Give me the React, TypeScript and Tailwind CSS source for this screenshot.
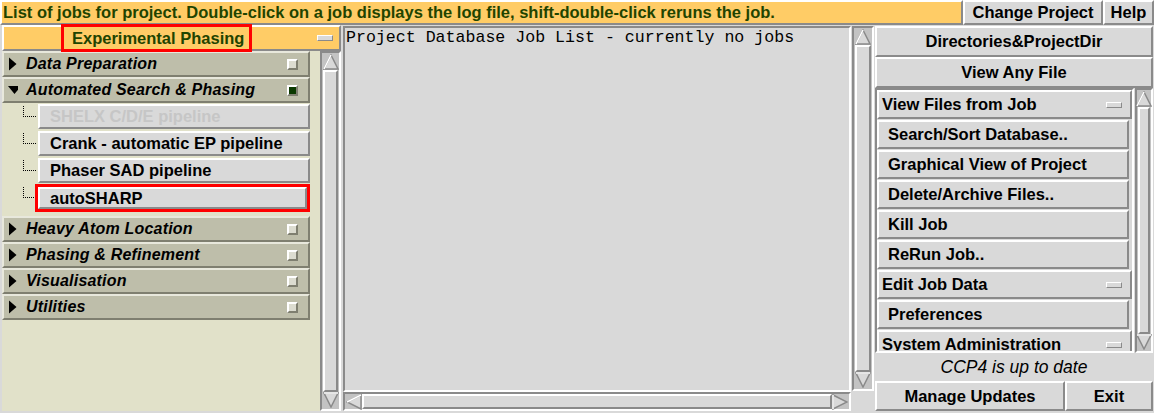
import React from 'react';

const raised = 'border-2 border-t-white border-l-white border-b-[#8a8a8a] border-r-[#8a8a8a]';
const sunken = 'border-2 border-t-[#8a8a8a] border-l-[#8a8a8a] border-b-white border-r-white';
const olive = 'border-2 border-t-[#e8e8dc] border-l-[#e8e8dc] border-b-[#7f7f70] border-r-[#7f7f70]';

const Arrow: React.FC<{ dir: 'up' | 'down' | 'left' | 'right' }> = ({ dir }) => {
  const pts = {
    up: '8,1 15,15 1,15',
    down: '1,1 15,1 8,15',
    left: '1,8 15,1 15,15',
    right: '1,1 15,8 1,15',
  }[dir];
  return (
    <svg width="16" height="16" viewBox="0 0 16 16" className="shrink-0">
      <polygon points={pts} fill="#d9d9d9" stroke="#8a8a8a" strokeWidth="1.5" />
      <polyline points={dir === 'up' ? '1,15 8,1' : dir === 'down' ? '1,1 15,1' : dir === 'left' ? '15,1 1,8' : '1,15 1,1'} fill="none" stroke="#fff" strokeWidth="1.5" />
    </svg>
  );
};

const VScroll: React.FC<{ w: string }> = ({ w }) => (
  <div className={`${w} ${sunken} bg-[#c3c3c3] flex flex-col items-stretch`}>
    <div className="flex justify-center pt-[1px]"><Arrow dir="up" /></div>
    <div className={`flex-1 ${raised} bg-[#d9d9d9] mx-[1px]`} />
    <div className="flex justify-center pb-[1px]"><Arrow dir="down" /></div>
  </div>
);

const Indicator: React.FC<{ on?: boolean }> = ({ on }) => (
  <div className={`w-[11px] h-[11px] border-2 ${on ? 'bg-[#0b3a00] border-t-white border-l-white border-b-[#7f7f70] border-r-[#7f7f70]' : 'bg-[#dcdcd0] border-t-white border-l-white border-b-[#7f7f70] border-r-[#7f7f70]'}`} />
);

const Dash: React.FC<{ className?: string }> = ({ className = '' }) => (
  <div className={`w-[16px] h-[6px] ${raised} border-[1.5px] bg-[#d9d9d9] ${className}`} />
);

const Category: React.FC<{ label: string; open?: boolean }> = ({ label, open }) => (
  <div className={`h-[26px] shrink-0 ${olive} bg-[#bebeaa] flex items-center pl-[4px] pr-[10px]`}>
    <svg width="10" height="14" viewBox="0 0 10 14" className="mr-[8px]">
      {open ? <polygon points="0,3 13,3 6.5,11" fill="#000" /> : <polygon points="1,0.5 8.5,7 1,13.5" fill="#000" />}
    </svg>
    <span className="flex-1 italic font-bold text-[16px] text-black tracking-[0.2px]">{label}</span>
    <Indicator on={open} />
  </div>
);

const SubItem: React.FC<{ label: string; disabled?: boolean; selected?: boolean }> = ({ label, disabled, selected }) => (
  <div className="flex items-start h-[27px] shrink-0">
    <svg width="36" height="26" viewBox="0 0 36 26" className="shrink-0" shapeRendering="crispEdges">
      <line x1="21.5" y1="2" x2="21.5" y2="13" stroke="#000" strokeWidth="1" strokeDasharray="1 1" />
      <line x1="23" y1="12.5" x2="35" y2="12.5" stroke="#000" strokeWidth="1" strokeDasharray="1 1" />
    </svg>
    <div className={`flex-1 ${selected ? 'h-[28px] -mt-[1px] border-[3px] border-[#ff0000] -ml-[3px]' : 'h-[25px]'}`}>
      <div className={`h-full ${raised} bg-[#d9d9d9] flex items-center pl-[10px] font-bold text-[16.5px] ${disabled ? 'text-[#c6c6c6]' : 'text-black'}`}>
        {label}
      </div>
    </div>
  </div>
);

const RightBtn: React.FC<{ label: string }> = ({ label }) => (
  <div className={`h-[29px] shrink-0 ${raised} bg-[#d9d9d9] flex items-center pl-[9px] font-bold text-[16.5px] text-black mt-[1px] mr-[3px]`}>{label}</div>
);

const RightMenu: React.FC<{ label: string }> = ({ label }) => (
  <div className={`h-[29px] shrink-0 ${raised} bg-[#d9d9d9] flex items-center pl-[3px] pr-[8px] font-bold text-[16.5px] text-black mt-[1px]`}>
    <span className="flex-1">{label}</span>
    <Dash />
  </div>
);

export default function App() {
  return (
    <div className="w-[1154px] h-[413px] bg-[#d9d9d9] flex flex-col overflow-hidden font-['Liberation_Sans',Arial,sans-serif] text-black">
      {/* top bar */}
      <div className="flex h-[25px] shrink-0">
        <div className={`flex-1 ${raised} bg-[#ffcc66] flex items-center pl-[1px] font-bold text-[16.5px] text-[#1f4400] whitespace-nowrap overflow-hidden`}>
          List of jobs for project. Double-click on a job displays the log file, shift-double-click reruns the job.
        </div>
        <div className={`w-[140px] ${raised} flex items-center justify-center font-bold text-[16.5px]`}>Change Project</div>
        <div className={`w-[51px] ${raised} flex items-center justify-center font-bold text-[16.5px]`}>Help</div>
      </div>

      <div className="flex flex-1 min-h-0">
        {/* left panel */}
        <div className="w-[341px] flex flex-col pl-[2px] pb-[2px]">
          <div className={`h-[26px] ${raised} bg-[#ffcc66] flex items-center relative`}>
            <div className="absolute left-[57px] top-[-3px] w-[191px] h-[28px] border-[3px] border-[#ff0000]" />
            <span className="flex-1 pl-[68px] font-bold text-[16.5px] text-[#1f4400]">Experimental Phasing</span>
            <Dash className="mr-[6px]" />
          </div>
          <div className="flex flex-1 min-h-0">
            <div className="flex-1 bg-[#e1e1c9] pr-[10px] flex flex-col">
              <Category label="Data Preparation" />
              <Category label="Automated Search & Phasing" open />
              <div className="h-[1px] shrink-0" />
              <SubItem label="SHELX C/D/E pipeline" disabled />
              <SubItem label="Crank - automatic EP pipeline" />
              <SubItem label="Phaser SAD pipeline" />
              <SubItem label="autoSHARP" selected />
              <div className="h-[4px] shrink-0" />
              <Category label="Heavy Atom Location" />
              <Category label="Phasing & Refinement" />
              <Category label="Visualisation" />
              <Category label="Utilities" />
            </div>
            <VScroll w="w-[21px]" />
          </div>
        </div>

        {/* middle panel */}
        <div className="w-[533px] flex flex-col pl-[2px] pt-[1px] pb-[2px]">
          <div className="flex flex-1 min-h-0">
            <div className={`flex-1 ${sunken} bg-[#d9d9d9] px-[1px] pt-[1px] font-['Liberation_Mono',monospace] text-[16.6px] leading-[18px] whitespace-pre`}>
              Project Database Job List - currently no jobs
            </div>
            <div className="w-[23px] pl-[1px] pb-[1px]">
              <VScroll w="w-[22px] h-full" />
            </div>
          </div>
          <div className="flex h-[19px] pr-[23px]">
            <div className={`flex-1 ${sunken} bg-[#c3c3c3] flex items-stretch`}>
              <div className="flex items-center pl-[1px]"><Arrow dir="left" /></div>
              <div className={`flex-1 ${raised} bg-[#d9d9d9]`} />
              <div className="flex items-center pr-[1px]"><Arrow dir="right" /></div>
            </div>
          </div>
        </div>

        {/* right panel */}
        <div className="flex-1 flex flex-col pl-[1px] pr-[1px] pt-[1px] pb-[2px]">
          <div className={`h-[31px] shrink-0 ${raised} flex items-center justify-center font-bold text-[16.5px]`}>Directories&amp;ProjectDir</div>
          <div className={`h-[31px] shrink-0 ${raised} flex items-center justify-center font-bold text-[16.5px]`}>View Any File</div>
          <div className="flex h-[265px] shrink-0">
            <div className={`flex-1 ${sunken} overflow-hidden flex flex-col`}>
              <div className="-mt-[1px] flex flex-col">
                <RightMenu label="View Files from Job" />
                <RightBtn label="Search/Sort Database.." />
                <RightBtn label="Graphical View of Project" />
                <RightBtn label="Delete/Archive Files.." />
                <RightBtn label="Kill Job" />
                <RightBtn label="ReRun Job.." />
                <RightMenu label="Edit Job Data" />
                <RightBtn label="Preferences" />
                <RightMenu label="System Administration" />
              </div>
            </div>
            <div className="w-[19px] pl-[1px]">
              <VScroll w="w-[18px] h-full" />
            </div>
          </div>
          <div className="flex-1 flex items-center justify-center italic text-[17.5px] font-normal">CCP4 is up to date</div>
          <div className="flex h-[30px] shrink-0">
            <div className={`w-[190px] ${raised} flex items-center justify-center font-bold text-[16.5px]`}>Manage Updates</div>
            <div className={`flex-1 ${raised} flex items-center justify-center font-bold text-[16.5px]`}>Exit</div>
          </div>
        </div>
      </div>
    </div>
  );
}
